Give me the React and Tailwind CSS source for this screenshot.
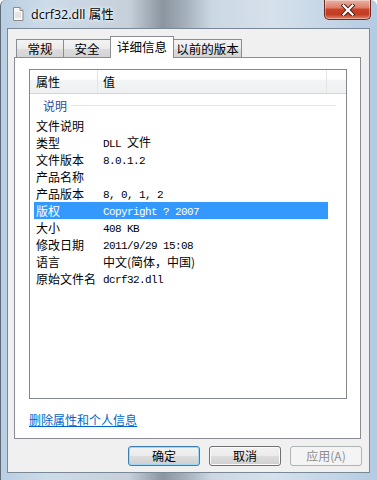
import React from 'react'

const cjk = "font-['Microsoft_YaHei','Noto_Sans_CJK_SC',sans-serif]"
const mono = "font-['Liberation_Mono','Noto_Sans_CJK_SC',monospace] text-[11px] tracking-[-0.6px]"

const M = ({ children }) => <span className={mono}>{children}</span>
const C = ({ children }) => <span className={`${cjk} text-[12px]`}>{children}</span>

const rows = [
    { label: '文件说明', value: null },
    { label: '类型', value: <><M>DLL </M><C>文件</C></> },
    { label: '文件版本', value: <M>8.0.1.2</M> },
    { label: '产品名称', value: null },
    { label: '产品版本', value: <M>8, 0, 1, 2</M> },
    { label: '版权', value: <M>Copyright ? 2007</M>, selected: true },
    { label: '大小', value: <M>408 KB</M> },
    { label: '修改日期', value: <M>2011/9/29 15:08</M> },
    { label: '语言', value: <C>中文(简体，中国)</C> },
    { label: '原始文件名', value: <M>dcrf32.dll</M> },
]

const tabs = [
    { title: '常规', w: 'w-[48px]' },
    { title: '安全', w: 'w-[48px]' },
    { title: '详细信息', w: 'w-[64px]', active: true },
    { title: '以前的版本', w: 'w-[69px]' },
]

const FileIcon = () => (
    <svg width="12" height="14" viewBox="0 0 12 14">
        <path d="M1.5 0.5 H8 L11 3.5 V13.5 H1.5 Z" fill="#f7f7f7" stroke="#8c8c8c" />
        <path d="M8 0.5 V3.5 H11" fill="#dcdcdc" stroke="#8c8c8c" />
        <path d="M3 6 H9 M3 8 H9 M3 10 H9" stroke="#d0d0d0" />
    </svg>
)

const CloseButton = () => (
    <div className="w-[47px] h-[20px] rounded-b-[5px] border border-t-0 border-[#6d2a20] bg-[linear-gradient(180deg,#eab3a4_0%,#dc7f68_40%,#c8432a_50%,#c23a22_75%,#e0866a_100%)] flex items-center justify-center shadow-[inset_0_0_0_1px_rgba(255,255,255,0.35)]">
        <svg width="14" height="12" viewBox="0 0 14 12">
            <path d="M2.5 1.5 L11.5 10.5 M11.5 1.5 L2.5 10.5" stroke="#4a1a12" strokeWidth="4" strokeLinecap="square" />
            <path d="M2.5 1.5 L11.5 10.5 M11.5 1.5 L2.5 10.5" stroke="#ffffff" strokeWidth="2.2" strokeLinecap="square" />
        </svg>
    </div>
)

const Button = ({ children, primary, disabled }) => {
    if (disabled) {
        return (
            <div className="w-[72px] h-[20px] rounded-[3px] border border-[#adb2b5] bg-[#f4f4f4] flex items-center justify-center">
                <span className={`${cjk} text-[12px] text-[#8d8d8d]`}>{children}</span>
            </div>
        )
    }
    return (
        <div className={`w-[72px] h-[20px] rounded-[3px] border ${primary ? 'border-[#3c7fb1] shadow-[inset_0_0_0_1px_#9fd8f6]' : 'border-[#707070] shadow-[inset_0_0_0_1px_#fbfbfb]'} bg-[linear-gradient(180deg,#f2f2f2_0%,#ebebeb_50%,#dddddd_51%,#cfcfcf_100%)] flex items-center justify-center`}>
            <span className={`${cjk} text-[12px] text-black`}>{children}</span>
        </div>
    )
}

const App = () => {
    return (
        <div className="w-[377px] h-[480px] flex flex-col overflow-hidden rounded-t-[6px] border-l border-[#5d6b79] bg-[linear-gradient(90deg,#b9cee3_0%,#cddbe9_12%,#c6d0da_34%,#8b959f_43%,#a4afba_49%,#cbd7e3_56%,#d6e1ec_72%,#c4d5e7_88%,#b3cbe3_100%)]">
            {/* title bar */}
            <div className="h-[28px] flex items-start shrink-0">
                <div className="mt-[7px] ml-[11px]">
                    <FileIcon />
                </div>
                <div className="ml-[7px] mt-[5px] text-[12.5px] text-black [text-shadow:0_0_6px_#fff,0_0_3px_#fff] font-['Segoe_UI','Open_Sans',sans-serif]">
                    dcrf32.dll <span className={cjk}>属性</span>
                </div>
                <div className="ml-auto mr-[6px]">
                    <CloseButton />
                </div>
            </div>

            {/* client area */}
            <div className="ml-[6px] w-[363px] h-[445px] border border-[#7b8896] bg-[#f0f0f0] flex flex-col">
                {/* tabs */}
                <div className="pt-[7px] pl-[8px] h-[28px] flex items-end shrink-0">
                    {tabs.map((tab, index) => (
                        <div
                            key={index}
                            className={
                                tab.active
                                    ? `${tab.w} h-[22px] -mb-px -ml-px relative z-10 border border-b-0 border-[#898c95] bg-white flex justify-center pt-[1px]`
                                    : `${tab.w} h-[18px] ${index > 0 ? '-ml-px' : ''} border border-b-0 border-[#898c95] bg-[linear-gradient(180deg,#f3f3f3_0%,#ebebeb_50%,#dcdcdc_51%,#d4d4d4_100%)] flex justify-center`
                            }
                        >
                            <span className={`${cjk} text-[12.5px] leading-[17px] text-black`}>{tab.title}</span>
                        </div>
                    ))}
                </div>

                {/* tab panel */}
                <div className="ml-[6px] w-[347px] h-[382px] border border-[#898c95] bg-white flex flex-col shrink-0">
                    {/* list view */}
                    <div className="ml-[14px] mt-[11px] w-[318px] h-[330px] border border-[#828790] bg-white flex flex-col">
                        <div className="h-[24px] border-b border-[#d5d5d5] bg-[linear-gradient(180deg,#ffffff_0%,#ffffff_40%,#f3f4f5_45%,#eef0f2_100%)] flex text-[12px] text-black">
                            <div className={`${cjk} w-[68px] pl-[6px] flex items-center border-r border-[#e3e5e8]`}>属性</div>
                            <div className={`${cjk} w-[229px] pl-[5px] flex items-center border-r border-[#e3e5e8]`}>值</div>
                        </div>

                        <div className="h-[23px] flex items-center pl-[13px] pr-[10px]">
                            <span className={`${cjk} text-[12px] text-[#2a4a9c]`}>说明</span>
                            <div className="ml-[4px] flex-1 h-px bg-[#e0e3e8]" />
                        </div>

                        <div className="flex flex-col">
                            {rows.map((row, index) => (
                                <div
                                    key={index}
                                    className={`ml-[4px] w-[294px] h-[17px] flex items-center ${row.selected ? 'bg-[#3399ff] text-white' : 'text-black'}`}
                                >
                                    <div className={`${cjk} w-[69px] pl-[2px] text-[12px] leading-[17px]`}>{row.label}</div>
                                    <div className="leading-[17px]">{row.value}</div>
                                </div>
                            ))}
                        </div>
                    </div>

                    <div className="ml-[14px] mt-[8px]">
                        <span className={`${cjk} text-[12px] leading-[16px] text-[#0066cc] underline`}>删除属性和个人信息</span>
                    </div>
                </div>

                {/* buttons */}
                <div className="mt-[7px] flex justify-end gap-[9px] pr-[7px]">
                    <Button primary>确定</Button>
                    <Button>取消</Button>
                    <Button disabled>应用(A)</Button>
                </div>
            </div>
        </div>
    )
}

export default App
